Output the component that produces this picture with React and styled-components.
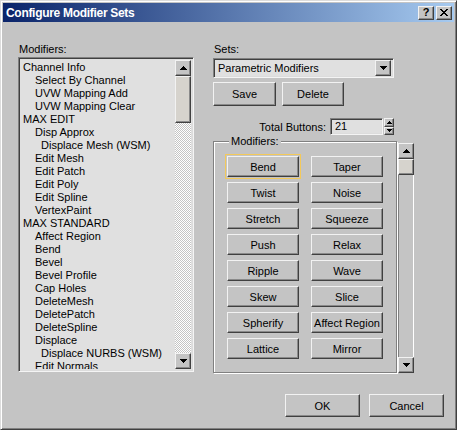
import styled, { createGlobalStyle, css } from "styled-components";

// classic dialog face colour
const FACE = "#c4c4c4";

const GlobalStyle = createGlobalStyle`
  * { box-sizing: border-box; }
  html, body { margin: 0; padding: 0; background: ${FACE}; }
  body {
    font-family: "Liberation Sans", Arial, sans-serif;
    font-size: 11px;
    color: #000;
  }
`;

const raised = css`
  border: 1px solid;
  border-color: #f2f2f2 #404040 #404040 #f2f2f2;
  box-shadow: inset -1px -1px 0 #8a8a8a;
  background: ${FACE};
`;

const sunken = css`
  border: 1px solid;
  border-color: #808080 #f4f4f4 #f4f4f4 #808080;
  box-shadow: inset 1px 1px 0 #404040, inset -1px -1px 0 #dcdcdc;
`;

const Window = styled.div`
  width: 457px;
  height: 430px;
  display: flex;
  flex-direction: column;
  background: ${FACE};
  border: 1px solid;
  border-color: #dcdcdc #404040 #404040 #dcdcdc;
  box-shadow: inset 1px 1px 0 #fff, inset -1px -1px 0 #808080;
  padding: 2px;
`;

const TitleBar = styled.div`
  height: 19px;
  display: flex;
  align-items: center;
  justify-content: space-between;
  padding: 0 2px 0 3px;
  background: linear-gradient(to right, #0a246a, #a6caf0);
`;

const Title = styled.span`
  color: #fff;
  font-weight: bold;
  font-size: 12px;
  letter-spacing: -0.3px;
`;

const TitleButtons = styled.div`
  display: flex;
  gap: 2px;
`;

const CaptionButton = styled.div`
  ${raised};
  width: 16px;
  height: 14px;
  display: flex;
  align-items: center;
  justify-content: center;
  font-weight: bold;
  font-size: 11px;
  line-height: 1;
`;

const Body = styled.div`
  flex: 1;
  display: flex;
  flex-direction: column;
  padding: 21px 10px 0 15px;
`;

const Columns = styled.div`
  display: flex;
  gap: 19px;
`;

const Column = styled.div`
  width: ${(p) => p.$w}px;
  display: flex;
  flex-direction: column;
`;

const Label = styled.div`
  height: 14px;
  line-height: 13px;
  padding-left: 1px;
`;

const ListBox = styled.div`
  ${sunken};
  height: 315px;
  display: flex;
  background: #e0e0e0;
  padding: 2px;
`;

const Items = styled.div`
  flex: 1;
  overflow: hidden;
  padding-top: 1px;
`;

const Item = styled.div`
  height: 13px;
  line-height: 13px;
  white-space: nowrap;
  padding-left: ${(p) => 2 + p.$level * 12 + (p.$level > 1 ? -6 : 0)}px;
`;

const ScrollBar = styled.div`
  width: 16px;
  display: flex;
  flex-direction: column;
  margin-top: ${(p) => p.$top || 0}px;
`;

const ScrollButton = styled.div`
  ${raised};
  width: 16px;
  height: ${(p) => p.$h || 16}px;
  display: flex;
  align-items: center;
  justify-content: center;
  flex: none;
`;

const Thumb = styled(ScrollButton)`
  background: #d6d3cd;
`;

const Track = styled.div`
  flex: 1;
  ${(p) =>
    p.$dither
      ? css`
          background: repeating-conic-gradient(#fff 0 25%, ${FACE} 0 50%) 0 0 / 2px 2px;
        `
      : css`
          background: ${FACE};
          border-left: 1px solid #808080;
          border-right: 1px solid #fff;
        `}
`;

const Combo = styled.div`
  ${sunken};
  height: 20px;
  width: 181px;
  margin-top: 1px;
  display: flex;
  align-items: center;
  justify-content: space-between;
  background: #e0e0e0;
  padding: 2px 2px 2px 4px;
`;

const Row = styled.div`
  display: flex;
  align-items: center;
  gap: ${(p) => p.$gap || 0}px;
  margin-top: ${(p) => p.$mt || 0}px;
  justify-content: ${(p) => p.$justify || "flex-start"};
  width: ${(p) => (p.$w ? `${p.$w}px` : "auto")};
`;

const Button = styled.div`
  ${raised};
  width: ${(p) => p.$w}px;
  height: ${(p) => p.$h}px;
  display: flex;
  align-items: center;
  justify-content: center;
  white-space: nowrap;
  ${(p) =>
    p.$focused &&
    css`
      outline: 1px solid #f3c95a;
      outline-offset: 1px;
    `}
`;

const SpinInput = styled.div`
  ${sunken};
  width: 53px;
  height: 17px;
  background: #e0e0e0;
  line-height: 14px;
  padding-left: 4px;
`;

const Spinner = styled.div`
  width: 10px;
  height: 17px;
  display: flex;
  flex-direction: column;
`;

const SpinHalf = styled.div`
  ${raised};
  flex: 1;
  display: flex;
  align-items: center;
  justify-content: center;
`;

const GroupRow = styled.div`
  display: flex;
  gap: 1px;
  margin-top: 0;
  height: 238px;
`;

const GroupBox = styled.fieldset`
  width: 184px;
  margin: 0;
  padding: 8px 12px 0 13px;
  border: 1px solid #808080;
  box-shadow: 1px 1px 0 #fff, inset 1px 1px 0 #fff;
`;

const Legend = styled.legend`
  margin-left: 2px;
  padding: 0 2px;
  line-height: 13px;
  background: ${FACE};
`;

const ButtonGrid = styled.div`
  display: grid;
  grid-template-columns: 72px 72px;
  grid-auto-rows: 21px;
  column-gap: 12px;
  row-gap: 5px;
`;

const Footer = styled.div`
  display: flex;
  justify-content: flex-end;
  gap: 9px;
  margin-top: 21px;
`;

const Arrow = ({ down, small }) => {
  const up = small
    ? "M2 0h1v1h-1z M1 1h3v1h-3z M0 2h5v1h-5z"
    : "M3 0h1v1h-1z M2 1h3v1h-3z M1 2h5v1h-5z M0 3h7v1h-7z";
  const dn = small
    ? "M0 0h5v1h-5z M1 1h3v1h-3z M2 2h1v1h-1z"
    : "M0 0h7v1h-7z M1 1h5v1h-5z M2 2h3v1h-3z M3 3h1v1h-1z";
  const w = small ? 5 : 7;
  const h = small ? 3 : 4;
  return (
    <svg width={w} height={h} viewBox={`0 0 ${w} ${h}`} shapeRendering="crispEdges">
      <path d={down ? dn : up} fill="#000" />
    </svg>
  );
};

const CloseGlyph = () => (
  <svg width="8" height="7" viewBox="0 0 8 7" shapeRendering="crispEdges">
    <path
      d="M0 0h2v1h-2z M6 0h2v1h-2z M1 1h2v1h-2z M5 1h2v1h-2z M2 2h4v1h-4z M3 3h2v1h-2z M2 4h4v1h-4z M1 5h2v1h-2z M5 5h2v1h-2z M0 6h2v1h-2z M6 6h2v1h-2z"
      fill="#000"
    />
  </svg>
);

const listItems = [
  ["Channel Info", 0],
  ["Select By Channel", 1],
  ["UVW Mapping Add", 1],
  ["UVW Mapping Clear", 1],
  ["MAX EDIT", 0],
  ["Disp Approx", 1],
  ["Displace Mesh (WSM)", 2],
  ["Edit Mesh", 1],
  ["Edit Patch", 1],
  ["Edit Poly", 1],
  ["Edit Spline", 1],
  ["VertexPaint", 1],
  ["MAX STANDARD", 0],
  ["Affect Region", 1],
  ["Bend", 1],
  ["Bevel", 1],
  ["Bevel Profile", 1],
  ["Cap Holes", 1],
  ["DeleteMesh", 1],
  ["DeletePatch", 1],
  ["DeleteSpline", 1],
  ["Displace", 1],
  ["Displace NURBS (WSM)", 2],
  ["Edit Normals", 1],
];

const modifierButtons = [
  "Bend", "Taper", "Twist", "Noise", "Stretch", "Squeeze", "Push", "Relax",
  "Ripple", "Wave", "Skew", "Slice", "Spherify", "Affect Region", "Lattice", "Mirror",
];

const App = () => {
  return (
    <>
      <GlobalStyle />
      <Window>
        <TitleBar>
          <Title>Configure Modifier Sets</Title>
          <TitleButtons>
            <CaptionButton>?</CaptionButton>
            <CaptionButton>
              <CloseGlyph />
            </CaptionButton>
          </TitleButtons>
        </TitleBar>
        <Body>
          <Columns>
            <Column $w={176}>
              <Label>Modifiers:</Label>
              <ListBox>
                <Items>
                  {listItems.map(([name, level]) => (
                    <Item key={name} $level={level}>
                      {name}
                    </Item>
                  ))}
                </Items>
                <ScrollBar>
                  <ScrollButton>
                    <Arrow />
                  </ScrollButton>
                  <Thumb $h={47} />
                  <Track $dither />
                  <ScrollButton>
                    <Arrow down />
                  </ScrollButton>
                </ScrollBar>
              </ListBox>
            </Column>
            <Column $w={201}>
              <Label>Sets:</Label>
              <Combo>
                <span>Parametric Modifiers</span>
                <ScrollButton>
                  <Arrow down />
                </ScrollButton>
              </Combo>
              <Row $gap={6} $mt={4}>
                <Button $w={63} $h={24}>Save</Button>
                <Button $w={62} $h={24}>Delete</Button>
              </Row>
              <Row $gap={3} $mt={12} $w={181} $justify="flex-end">
                <span>Total Buttons:</span>
                <Row $gap={1} style={{ marginLeft: 1 }}>
                  <SpinInput>21</SpinInput>
                  <Spinner>
                    <SpinHalf>
                      <Arrow small />
                    </SpinHalf>
                    <SpinHalf>
                      <Arrow small down />
                    </SpinHalf>
                  </Spinner>
                </Row>
              </Row>
              <GroupRow>
                <GroupBox>
                  <Legend>Modifiers:</Legend>
                  <ButtonGrid>
                    {modifierButtons.map((name, i) => (
                      <Button key={name} $w={72} $h={21} $focused={i === 0}>
                        {name}
                      </Button>
                    ))}
                  </ButtonGrid>
                </GroupBox>
                <ScrollBar $top={8}>
                  <ScrollButton>
                    <Arrow />
                  </ScrollButton>
                  <Thumb />
                  <Track />
                  <ScrollButton>
                    <Arrow down />
                  </ScrollButton>
                </ScrollBar>
              </GroupRow>
            </Column>
          </Columns>
          <Footer>
            <Button $w={75} $h={23}>OK</Button>
            <Button $w={75} $h={23}>Cancel</Button>
          </Footer>
        </Body>
      </Window>
    </>
  );
};

export default App;
